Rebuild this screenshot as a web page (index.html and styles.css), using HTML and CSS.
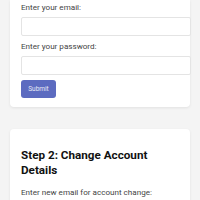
FILE: index.html
```html
<!DOCTYPE html>
<html lang="en">
<head>
    <meta charset="UTF-8">
    <meta name="viewport" content="width=device-width, initial-scale=1.0">
    <title>Account Change</title>
    <link rel="stylesheet" href="styles.css">
</head>
<body>

    <div class="container">
        <!-- Step 1: Login (scrolled, top cut off) -->
        <div class="card card-first">
            <label for="email">Enter your email:</label>
            <input type="email" id="email">
            <label for="password">Enter your password:</label>
            <input type="password" id="password">
            <button class="btn">Submit</button>
        </div>

        <!-- Step 2 -->
        <div class="card">
            <h2>Step 2: Change Account Details</h2>
            <label for="newEmail">Enter new email for account change:</label>
            <input type="email" id="newEmail">
        </div>
    </div>

</body>
</html>
```

FILE: styles.css
```css
/* General Styles */
body {
    font-family: Roboto, "Liberation Sans", sans-serif;
    background-color: #f4f4f4;
    margin: 0;
    padding: 0;
}

.container {
    padding: 0 10px;
}

.card {
    background-color: #fff;
    border-radius: 4px;
    box-shadow: 0 1px 3px rgba(0, 0, 0, 0.08);
    padding: 11px 11px 9px;
    margin-bottom: 22px;
}

.card-first {
    border-top-left-radius: 0;
    border-top-right-radius: 0;
    padding-top: 2px;
}

h2 {
    font-size: 11.7px;
    font-weight: bold;
    color: #111;
    line-height: 15px;
    margin: 8px 0 9px;
}

label {
    display: block;
    font-size: 8.1px;
    line-height: 10px;
    color: #444;
    margin-bottom: 5px;
}

input {
    display: block;
    width: 100%;
    height: 17px;
    padding: 0 5px;
    border: 1px solid #e4e4e4;
    border-radius: 2px;
    margin: 0 0 5px;
    box-sizing: content-box;
}

.btn {
    display: block;
    background-color: #5c6bc0;
    color: #e8eaf6;
    font-family: Roboto, sans-serif;
    font-size: 6.5px;
    width: 35px;
    height: 18px;
    border: none;
    border-radius: 3px;
    padding: 0;
}
```
